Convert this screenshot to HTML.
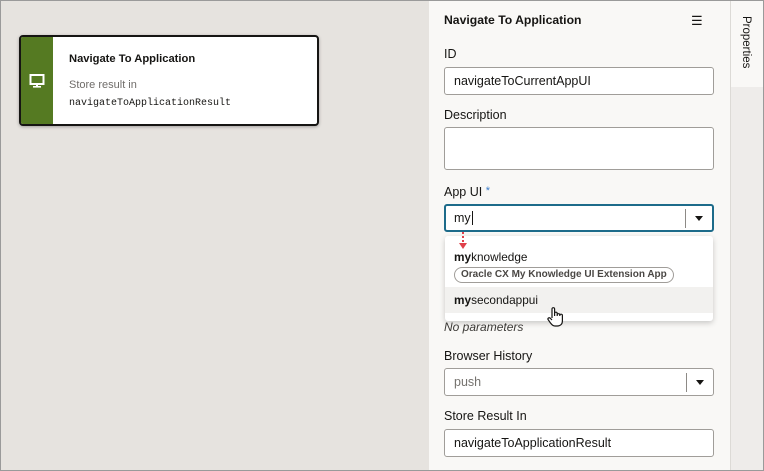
<!DOCTYPE html>
<html><head><style>
*{box-sizing:border-box;margin:0;padding:0}
body{width:764px;height:471px;overflow:hidden;font-family:"Liberation Sans",sans-serif;background:#e6e3df;position:relative}
.frame{position:absolute;left:0;top:0;width:764px;height:471px;border:1px solid #9a9a9a;pointer-events:none;z-index:10}
.abs{position:absolute}
.card{left:19px;top:35px;width:300px;height:91px;background:#fff;border:2px solid #161513;border-radius:4px;overflow:hidden;box-shadow:0 1px 3px rgba(0,0,0,.3)}
.band{left:0;top:0;width:32px;height:100%;background:#557a22}
.panel{left:429px;top:0;width:301px;height:471px;background:#f9f8f6;border-top:1px solid #ccc}
.strip{left:730px;top:0;width:34px;height:471px;background:#eeecea;border-left:1px solid #dcdad6}
.tab{left:731px;top:0;width:33px;height:87px;background:#f9f8f6}
.lbl{font-size:12.5px;color:#161513}
.inp{background:#fff;border:1px solid #a09d99;border-radius:3px;font-size:12.5px;color:#161513;padding-left:9px;line-height:26px}
.caret{position:absolute;right:0;top:4px;width:27px;height:19px;border-left:1px solid #8d8a86}
.caret:after{content:"";position:absolute;left:9px;top:7px;border-left:4px solid transparent;border-right:4px solid transparent;border-top:5px solid #161513}
</style></head><body>
<div class="abs card"><div class="abs band"></div>
<svg class="abs" style="left:8px;top:36px" width="16" height="16" viewBox="0 0 16 16"><rect x="1.5" y="2" width="13" height="9" fill="none" stroke="#fff" stroke-width="2"/><rect x="7" y="11" width="2" height="3" fill="#fff"/><rect x="4" y="13" width="8" height="1.6" fill="#fff"/></svg>
<div class="abs" style="left:48px;top:16px;font-size:11.2px;font-weight:bold;color:#161513">Navigate To Application</div>
<div class="abs" style="left:48px;top:42px;font-size:11px;color:#6f6c69">Store result in</div>
<div class="abs" style="left:48px;top:61px;font-size:10px;font-family:'Liberation Mono',monospace;color:#161513">navigateToApplicationResult</div>
</div>
<div class="abs panel"></div>
<div class="abs strip"></div>
<div class="abs tab"></div>
<div class="abs" style="left:740px;top:16px;writing-mode:vertical-rl;font-size:11.5px;color:#161513">Properties</div>
<div class="abs" style="left:444px;top:13px;font-size:12.2px;font-weight:bold;color:#161513">Navigate To Application</div>
<div class="abs" style="left:691px;top:13px;font-size:13px;color:#161513">☰</div>
<div class="abs lbl" style="left:444px;top:47px">ID</div>
<div class="abs inp" style="left:444px;top:67px;width:270px;height:28px">navigateToCurrentAppUI</div>
<div class="abs lbl" style="left:444px;top:108px">Description</div>
<div class="abs inp" style="left:444px;top:127px;width:270px;height:43px"></div>
<div class="abs lbl" style="left:444px;top:185px">App UI <span style="color:#3a7bc8;font-size:11px;vertical-align:top">*</span></div>
<div class="abs inp" style="left:444px;top:204px;width:270px;height:28px;border:2px solid #1d6b8a;padding-left:8px;line-height:25px">my<span style="border-left:1px solid #161513;margin-left:1px"></span><div class="caret" style="top:3px"></div></div>
<div class="abs" style="left:445px;top:236px;width:268px;height:85px;background:#fff;border-radius:3px;box-shadow:0 2px 6px rgba(0,0,0,.2)">
<div class="abs" style="left:0;top:51px;width:268px;height:26px;background:#f2f1ef"></div>
<div class="abs" style="left:9px;top:14px;font-size:11.8px;color:#161513"><b>my</b>knowledge</div>
<div class="abs" style="left:9px;top:31px;height:16px;padding:0 6px;border:1px solid #a09d99;border-radius:9px;font-size:10px;font-weight:bold;color:#4a4744;line-height:14px">Oracle CX My Knowledge UI Extension App</div>
<div class="abs" style="left:9px;top:57px;font-size:11.8px;color:#161513"><b>my</b>secondappui</div>
</div>
<svg class="abs" style="left:458px;top:232px" width="10" height="20"><line x1="5" y1="0" x2="5" y2="11" stroke="#e0404a" stroke-width="2" stroke-dasharray="2 2"/><path d="M1 11h8l-4 6z" fill="#e0404a"/></svg>
<svg class="abs" style="left:546px;top:306px" width="18" height="22" viewBox="0 0 18 22"><path d="M6 12V3a1.3 1.3 0 0 1 2.6 0v7 M8.6 9V7.5a1.3 1.3 0 0 1 2.6 0V10 M11.2 9a1.3 1.3 0 0 1 2.6 0v1 M13.8 9.5a1.3 1.3 0 0 1 2.6 0V15c0 3-2 5-5 5H9c-2 0-3-1-4.5-3L2 13.5a1.3 1.3 0 0 1 2-1.5L6 14" fill="#fff" stroke="#161513" stroke-width="1.2"/></svg>
<div class="abs" style="left:444px;top:320px;font-size:12px;font-style:italic;color:#3b3936">No parameters</div>
<div class="abs lbl" style="left:444px;top:349px">Browser History</div>
<div class="abs inp" style="left:444px;top:368px;width:270px;height:28px;color:#75726e">push<div class="caret"></div></div>
<div class="abs lbl" style="left:444px;top:409px">Store Result In</div>
<div class="abs inp" style="left:444px;top:429px;width:270px;height:28px">navigateToApplicationResult</div>
<div class="frame"></div>
</body></html>
